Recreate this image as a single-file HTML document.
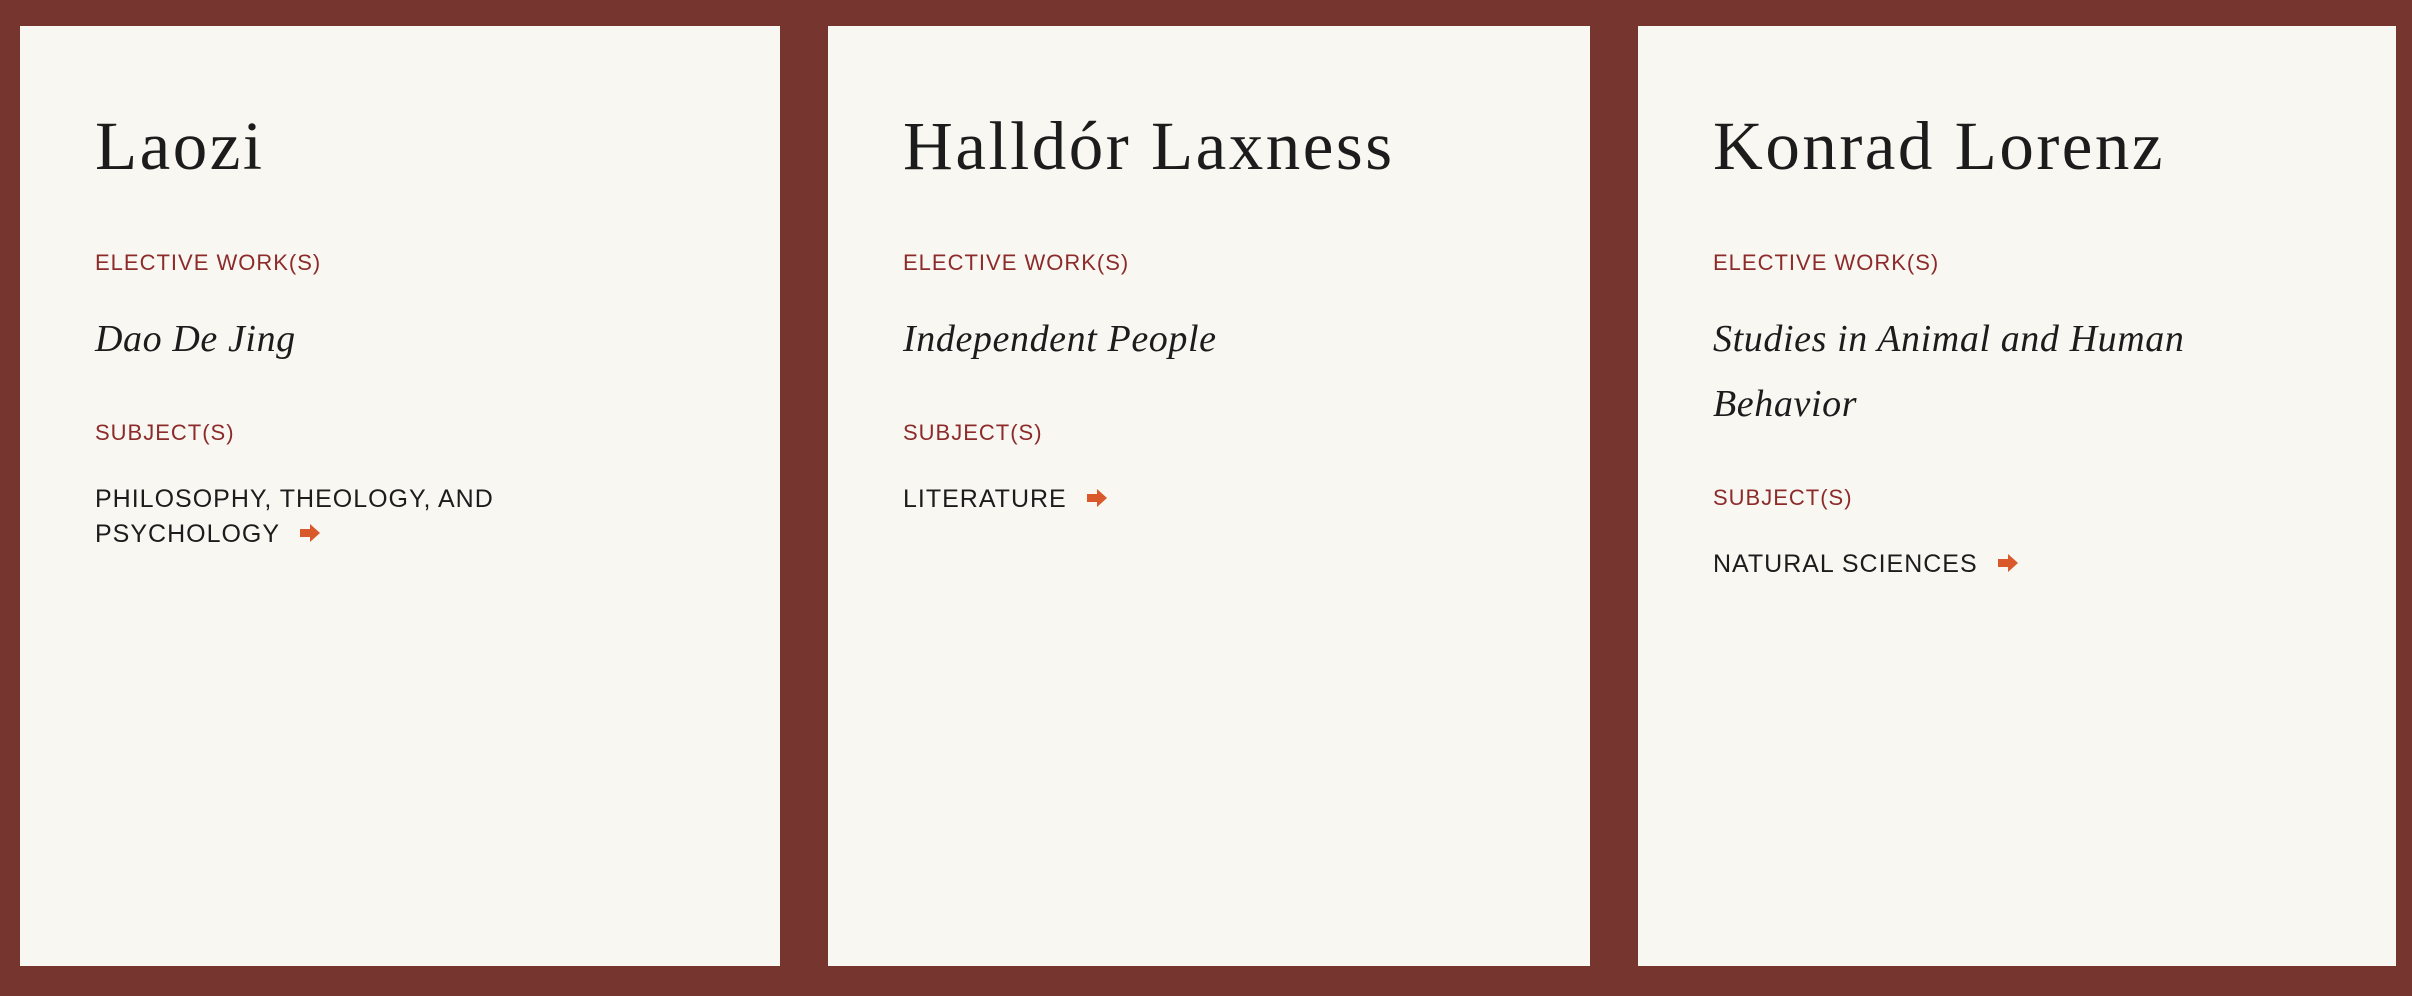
<!DOCTYPE html>
<html><head><meta charset="utf-8"><style>
*{margin:0;padding:0;box-sizing:border-box}
html,body{width:2412px;height:996px;background:#76352e;overflow:hidden}
.card{position:absolute;top:26px;height:940px;background:#f8f7f2}
.t{position:absolute;left:75px;white-space:nowrap;line-height:1}
.name{font-family:"Liberation Serif",serif;font-size:69px;letter-spacing:2.5px;color:#1c1c1c}
.lab{font-family:"Liberation Sans",sans-serif;font-size:22px;letter-spacing:1px;color:#8d2b2b}
.work{font-family:"Liberation Serif",serif;font-style:italic;font-size:38px;letter-spacing:0.6px;color:#1c1c1c}
.sub{font-family:"Liberation Sans",sans-serif;font-size:25px;letter-spacing:1px;color:#1c1c1c;line-height:35px}
.arr{display:inline-block;vertical-align:0px;margin-left:20px}
</style></head><body>
<div class="card" style="left:20px;width:760px">
 <div class="t name" style="top:86px">Laozi</div>
 <div class="t lab" style="top:226px">ELECTIVE WORK(S)</div>
 <div class="t work" style="top:294px">Dao De Jing</div>
 <div class="t lab" style="top:396px">SUBJECT(S)</div>
 <div class="t sub" style="top:456px">PHILOSOPHY, THEOLOGY, AND<br>PSYCHOLOGY<svg class="arr" width="20" height="18" viewBox="0 0 20 18"><path d="M0 5h10V0l10 9-10 9v-5H0z" fill="#d9592b"/></svg></div>
</div>
<div class="card" style="left:828px;width:762px">
 <div class="t name" style="top:86px">Halldór Laxness</div>
 <div class="t lab" style="top:226px">ELECTIVE WORK(S)</div>
 <div class="t work" style="top:294px">Independent People</div>
 <div class="t lab" style="top:396px">SUBJECT(S)</div>
 <div class="t sub" style="top:456px">LITERATURE<svg class="arr" width="20" height="18" viewBox="0 0 20 18"><path d="M0 5h10V0l10 9-10 9v-5H0z" fill="#d9592b"/></svg></div>
</div>
<div class="card" style="left:1638px;width:758px">
 <div class="t name" style="top:86px">Konrad Lorenz</div>
 <div class="t lab" style="top:226px">ELECTIVE WORK(S)</div>
 <div class="t work" style="top:294px">Studies in Animal and Human</div>
 <div class="t work" style="top:359px">Behavior</div>
 <div class="t lab" style="top:461px">SUBJECT(S)</div>
 <div class="t sub" style="top:521px">NATURAL SCIENCES<svg class="arr" width="20" height="18" viewBox="0 0 20 18"><path d="M0 5h10V0l10 9-10 9v-5H0z" fill="#d9592b"/></svg></div>
</div>
</body></html>
